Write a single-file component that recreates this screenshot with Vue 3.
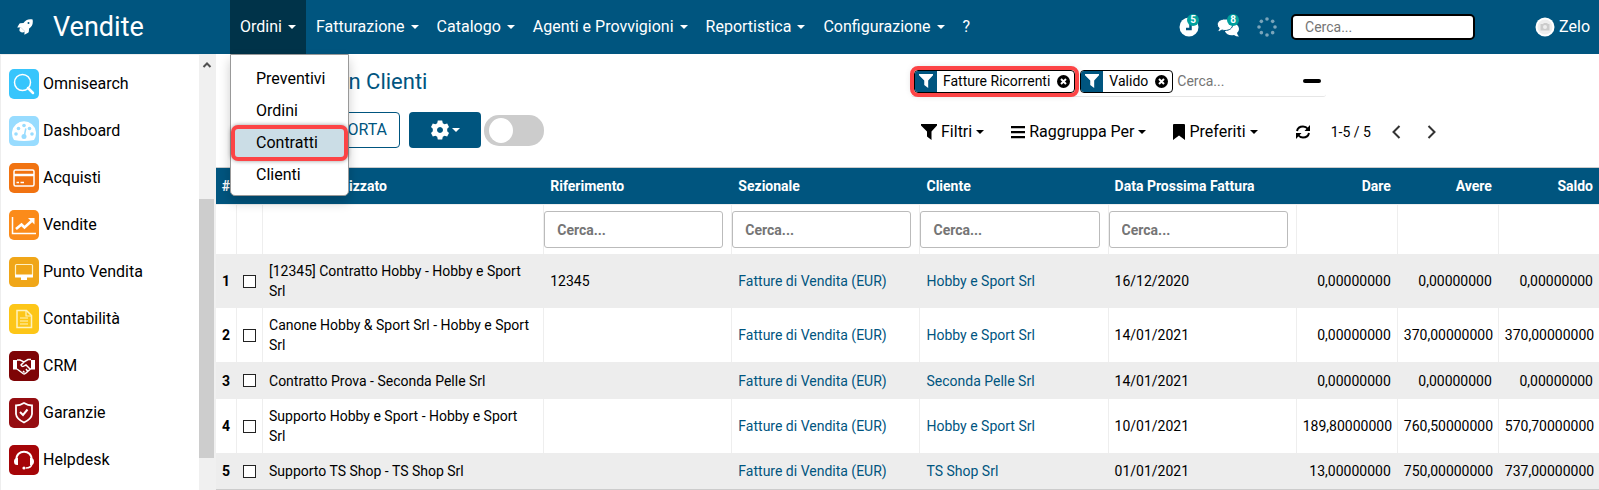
<script setup>
const menus = ['Ordini', 'Fatturazione', 'Catalogo', 'Agenti e Provvigioni', 'Reportistica', 'Configurazione']
const submenu = ['Preventivi', 'Ordini', 'Contratti', 'Clienti']
const apps = [
  { name: 'Omnisearch', key: 'search' },
  { name: 'Dashboard', key: 'dash' },
  { name: 'Acquisti', key: 'card' },
  { name: 'Vendite', key: 'chart' },
  { name: 'Punto Vendita', key: 'pos' },
  { name: 'Contabilità', key: 'doc' },
  { name: 'CRM', key: 'crm' },
  { name: 'Garanzie', key: 'shield' },
  { name: 'Helpdesk', key: 'help' }
]
const facets = [
  { label: 'Fatture Ricorrenti', marked: true },
  { label: 'Valido', marked: false }
]
const filterCols = ['Riferimento', 'Sezionale', 'Cliente', 'Data Prossima Fattura']
const amountCols = ['Dare', 'Avere', 'Saldo']
const journal = 'Fatture di Vendita (EUR)'
const rows = [
  { name: '[12345] Contratto Hobby - Hobby e Sport Srl', ref: '12345', client: 'Hobby e Sport Srl', date: '16/12/2020', amounts: ['0,00000000', '0,00000000', '0,00000000'] },
  { name: 'Canone Hobby & Sport Srl - Hobby e Sport Srl', ref: '', client: 'Hobby e Sport Srl', date: '14/01/2021', amounts: ['0,00000000', '370,00000000', '370,00000000'] },
  { name: 'Contratto Prova - Seconda Pelle Srl', ref: '', client: 'Seconda Pelle Srl', date: '14/01/2021', amounts: ['0,00000000', '0,00000000', '0,00000000'] },
  { name: 'Supporto Hobby e Sport - Hobby e Sport Srl', ref: '', client: 'Hobby e Sport Srl', date: '10/01/2021', amounts: ['189,80000000', '760,50000000', '570,70000000'] },
  { name: 'Supporto TS Shop - TS Shop Srl', ref: '', client: 'TS Shop Srl', date: '01/01/2021', amounts: ['13,00000000', '750,00000000', '737,00000000'] }
]
const dots = Array.from({ length: 8 }, (_, i) => ({
  x: 10 + 8 * Math.cos((i * Math.PI) / 4),
  y: 10 + 8 * Math.sin((i * Math.PI) / 4)
}))
</script>

<template>
  <div class="page">
    <header class="topbar">
      <a href="#" class="brand">
        <svg width="16" height="16" viewBox="0 0 16 16" fill="#fff">
          <path d="M15.600.4C11.300-.4 8.400 1 6.500 3.900L3.200 4.200Q2.600 4.300 2.200 4.900L.2 8.600L3.900 8.500L7.500 12.100L7.400 15.800L11.100 13.800Q11.700 13.400 11.800 12.800L12.100 9.500C15 7.600 16.400 4.700 15.600.4ZM11.500 5A1 1 0 1 1 11.510 3A1 1 0 0 1 11.500 5Z" fill-rule="evenodd" />
          <path d="M3.500 8L8 12.500L6 13.500Q4 13.500 2.500 12Q2 10 3.500 8Z" />
        </svg>
        <span>Vendite</span>
      </a>
      <nav class="menu">
        <div v-for="(m, i) in menus" :key="m" class="menu-item" :class="{ active: i === 0 }">
          <button type="button" class="menu-btn">{{ m }}<i class="caret"></i></button>
          <div v-if="i === 0" class="dropdown">
            <a v-for="s in submenu" :key="s" href="#" :class="{ marked: s === 'Contratti' }">{{ s }}</a>
          </div>
        </div>
        <div class="menu-item"><button type="button" class="menu-btn">?</button></div>
      </nav>
      <div class="tools">
        <button type="button" class="tool" aria-label="Attività">
          <svg width="20" height="20" viewBox="0 0 20 20"><circle cx="10" cy="10" r="9.500" fill="#fff" /><path d="M11.500 4V12H7" fill="none" stroke="#00557f" stroke-width="2.500" /></svg>
          <span class="badge">5</span>
        </button>
        <button type="button" class="tool" aria-label="Messaggi">
          <svg width="22" height="20" viewBox="0 0 22 20" fill="#fff">
            <path d="M10 7C17 4 22 8 22 12Q22 14.500 20 16Q20.500 18 22 19.500Q19 19.500 17 18Q10 19 8 14.500Z" />
            <path d="M8 2C12.500 2 15.600 4.500 15.600 7.800S12.500 13.500 8 13.500Q6.500 13.500 5 13Q3 14.700.2 14.700Q1.700 13 2.200 11.200Q.3 9.500.3 7.800C.3 4.500 3.500 2 8 2Z" stroke="#00557f" />
          </svg>
          <span class="badge">8</span>
        </button>
        <svg class="spinner" width="20" height="20" viewBox="0 0 20 20">
          <circle v-for="(d, i) in dots" :key="i" :cx="d.x" :cy="d.y" r="1.800" fill="#7aa5bb" />
        </svg>
        <input class="top-search" type="text" placeholder="Cerca..." aria-label="Cerca nel menu" />
        <a href="#" class="user">
          <svg width="20" height="20" viewBox="0 0 20 20">
            <circle cx="10" cy="10" r="9.500" fill="#fff" /><circle cx="10" cy="10" r="7.500" fill="#eee" />
            <path d="M5.500 7H8L9 6H12L13 7H14.500V13.500H5.500Z" fill="#ccc" /><circle cx="10" cy="10" r="2" fill="#eee" />
          </svg>
          Zelo
        </a>
      </div>
    </header>

    <div class="body">
      <aside class="sidebar">
        <nav class="apps">
          <a v-for="a in apps" :key="a.key" href="#" class="app">
            <span class="app-icon" :class="a.key">
              <svg width="30" height="30" viewBox="0 0 30 30" fill="none" stroke="#fff" stroke-width="1.500">
                <template v-if="a.key === 'search'">
                  <circle cx="13.500" cy="13.500" r="8" /><path d="M19 19L24 24" stroke-width="2.500" stroke-linecap="round" />
                </template>
                <template v-else-if="a.key === 'dash'">
                  <path d="M5 24A12 12 0 1 1 25 24Q15 26 5 24Z" fill="#fff" stroke="none" />
                  <g fill="#98dcff" stroke="none">
                    <circle cx="7" cy="18" r="1.800" /><circle cx="9.500" cy="12.500" r="1.800" /><circle cx="15" cy="9.500" r="1.800" />
                    <circle cx="20.500" cy="12.500" r="1.800" /><circle cx="23" cy="18" r="1.800" /><circle cx="15" cy="20.500" r="2.500" />
                  </g>
                  <path d="M15.300 20L16.800 12.500" stroke="#98dcff" />
                </template>
                <template v-else-if="a.key === 'card'">
                  <rect x="5" y="7" width="20" height="16" rx="1.500" /><path d="M5 12H25" stroke-width="2.500" /><path d="M7.500 19.500H10M11.500 19.500H15" />
                </template>
                <template v-else-if="a.key === 'chart'">
                  <path d="M3.500 7V23.500H27" />
                  <path d="M7 19L12.500 14.500L15.500 17.500L22.500 11" stroke-width="2.600" /><path d="M19 8H25.500V14.500Z" fill="#fff" stroke="none" />
                </template>
                <template v-else-if="a.key === 'pos'">
                  <rect x="6.500" y="7.500" width="17" height="11" rx="1" stroke-width="1.200" stroke="#fff0c0" />
                  <path d="M6 17.500H24V20Q24 20.500 23.500 20.500H18V23H12V20.500H6.500Q6 20.500 6 20Z" fill="#fff" stroke="none" />
                </template>
                <template v-else-if="a.key === 'doc'">
                  <path d="M8 6.500H17.500L22.500 11.500V23.500H8Z" stroke="#fff3bd" /><path d="M17 7V12H22M11 14H19M11 17H19M11 20H19" stroke="#fff3bd" stroke-width="1.200" />
                </template>
                <template v-else-if="a.key === 'crm'">
                  <path d="M8 9H11L15 11L19 8.500H22M8 18L14 22.500Q15.500 23.500 17 22L22 17.500M15 11L12 14Q13 16.500 16 14.500L17 14L21 18M17 18L18.500 20M14 20L15.500 21.500" />
                  <path d="M4 9H8V18.500H4ZM22 9H26V18.500H22Z" fill="#fff" stroke="none" />
                </template>
                <template v-else-if="a.key === 'shield'">
                  <path d="M15 5Q19 7.500 23 7.500V16Q22.500 21 15 24.500Q7.500 21 7 16V7.500Q11 7.500 15 5Z" stroke-width="1.800" /><path d="M11 14L14 17L18.500 11.500" stroke-width="2" />
                </template>
                <template v-else>
                  <path d="M7.500 15C6.500 4 23.500 4 22.500 15" stroke-width="2" />
                  <path d="M9 13V20Q5 20.500 5 16.500T9 13ZM21 13V20Q25 20.500 25 16.500T21 13Z" fill="#fff" stroke="none" />
                  <path d="M23 19Q22 23 17 23" /><circle cx="15" cy="23" r="1.600" fill="#fff" stroke="none" />
                </template>
              </svg>
            </span>
            {{ a.name }}
          </a>
        </nav>
        <div class="scroll" aria-hidden="true">
          <svg width="16" height="20" viewBox="0 0 16 20"><path d="M4.500 12L8 8.500L11.500 12" fill="none" stroke="#505050" stroke-width="2" /></svg>
          <div class="thumb"></div>
        </div>
      </aside>

      <main class="content">
        <section class="panel">
          <div class="left">
            <h1>Contratti con Clienti</h1>
            <div class="actions">
              <button type="button" class="outline">IMPORTA</button>
              <button type="button" class="gear" aria-label="Azioni">
                <svg width="18" height="20" viewBox="-9 -10 18 20" fill="#fff">
                  <path fill-rule="evenodd" d="M-2.200-9.500H2.200L2.800-6.700L4.600-5.700L7.200-6.600L9-3L7.200-1.200V1.200L9 3L7.200 6.600L4.600 5.700L2.800 6.700L2.200 9.500H-2.200L-2.800 6.700L-4.600 5.700L-7.200 6.600L-9 3L-7.200 1.200V-1.200L-9-3L-7.200-6.600L-4.600-5.700L-2.800-6.700ZM0-3A3 3 0 1 0 .01-3Z" />
                </svg>
                <i class="caret"></i>
              </button>
              <input type="checkbox" class="switch" aria-label="Attiva" />
            </div>
          </div>
          <div class="right">
            <div class="searchbar">
              <span v-for="f in facets" :key="f.label" class="facet" :class="{ marked: f.marked }">
                <span class="facet-icon"><svg width="14" height="16" viewBox="0 0 16 16" fill="#fff"><path d="M0 0H16V1.500L10.500 7.500V16L6 12.500V7.500L0 1.500Z" /></svg></span>
                <span class="facet-label">{{ f.label }}</span>
                <button type="button" class="facet-x" :aria-label="'Rimuovi ' + f.label">
                  <svg width="13" height="13" viewBox="0 0 12 12"><circle cx="6" cy="6" r="6" /><path d="M3.700 3.700L8.300 8.300M8.300 3.700L3.700 8.300" stroke="#fff" stroke-width="1.800" /></svg>
                </button>
              </span>
              <input type="text" placeholder="Cerca..." aria-label="Cerca" />
              <button type="button" class="minus" aria-label="Riduci"></button>
            </div>
            <div class="options">
              <button type="button" class="opt">
                <svg width="16" height="16" viewBox="0 0 16 16"><path d="M0 0H16V1.500L10.500 7.500V16L6 12.500V7.500L0 1.500Z" /></svg>Filtri<i class="caret"></i>
              </button>
              <button type="button" class="opt">
                <svg width="14" height="14" viewBox="0 0 14 14"><path d="M0 1H14V3.200H0ZM0 6H14V8.200H0ZM0 11H14V13.200H0Z" /></svg>Raggruppa Per<i class="caret"></i>
              </button>
              <button type="button" class="opt">
                <svg width="12" height="16" viewBox="0 0 12 16"><path d="M0 1Q0 0 1 0H11Q12 0 12 1V16L6 11.500L0 16Z" /></svg>Preferiti<i class="caret"></i>
              </button>
              <div class="pager">
                <button type="button" class="opt" aria-label="Aggiorna">
                  <svg width="16" height="16" viewBox="0 0 16 16" fill="none" stroke="#000" stroke-width="2"><path d="M2 7Q3 2.500 8 2.500Q11 2.500 13 5M14 9Q13 13.500 8 13.500Q5 13.500 3 11" /><path d="M15 1V7H9.500ZM1 15V9H6.500Z" fill="#000" stroke="none" /></svg>
                </button>
                <span>1-5 / 5</span>
                <button type="button" class="opt" aria-label="Precedente"><svg width="10" height="16" viewBox="0 0 10 16" fill="none" stroke="#333" stroke-width="2"><path d="M8.500 2L2.500 8L8.500 14" /></svg></button>
                <button type="button" class="opt" aria-label="Successiva"><svg width="10" height="16" viewBox="0 0 10 16" fill="none" stroke="#333" stroke-width="2"><path d="M1.500 2L7.500 8L1.500 14" /></svg></button>
              </div>
            </div>
          </div>
        </section>

        <table>
          <colgroup>
            <col class="c-num" /><col class="c-check" /><col class="c-name" />
            <col v-for="c in filterCols" :key="c" class="c-text" />
            <col v-for="c in amountCols" :key="c" class="c-amount" />
          </colgroup>
          <thead>
            <tr class="head">
              <th class="num">#</th><th></th><th class="visual">Nome Visualizzato</th>
              <th v-for="c in filterCols" :key="c">{{ c }}</th>
              <th v-for="c in amountCols" :key="c" class="amount">{{ c }}</th>
            </tr>
            <tr class="filters">
              <td></td><td></td><td></td>
              <td v-for="c in filterCols" :key="c" class="filter"><input type="text" placeholder="Cerca..." :aria-label="'Cerca ' + c" /></td>
              <td v-for="c in amountCols" :key="c"></td>
            </tr>
          </thead>
          <tbody>
            <tr v-for="(r, i) in rows" :key="i">
              <th class="num" scope="row">{{ i + 1 }}</th>
              <td class="check"><input type="checkbox" :aria-label="'Seleziona ' + r.name" /></td>
              <td class="name">{{ r.name }}</td>
              <td>{{ r.ref }}</td>
              <td><a href="#">{{ journal }}</a></td>
              <td><a href="#">{{ r.client }}</a></td>
              <td>{{ r.date }}</td>
              <td v-for="(v, k) in r.amounts" :key="k" class="amount">{{ v }}</td>
            </tr>
          </tbody>
        </table>
      </main>
    </div>
  </div>
</template>

<style>
body { background: #fff; overflow: hidden; }
</style>

<style scoped>
.page { font: 14px/20px Roboto, "Noto Sans", sans-serif; color: #000; }
.page * { box-sizing: border-box; }
a { color: inherit; text-decoration: none; }
button { font: inherit; color: inherit; background: none; border: 0; padding: 0; margin: 0; display: inline-flex; align-items: center; }
input { font: inherit; margin: 0; border-radius: 0; outline: 0; }
input::placeholder { color: #757575; opacity: 1; }
svg { display: block; flex: none; }
.caret { width: 8px; border: 4px solid transparent; border-top-color: currentColor; border-bottom: 0; }

.topbar { display: flex; height: 54px; background: #00557f; color: #fff; font-size: 16px; }
.brand { display: flex; align-items: center; gap: 20px; width: 230px; padding-left: 17px; font-size: 27px; flex: none; }
.menu { display: flex; flex: 1; }
.menu-item { position: relative; display: flex; }
.menu-btn { padding: 0 8px 0 10px; gap: 6px; white-space: nowrap; }
.active { background: #003349; }
.active .menu-btn { padding-right: 10px; }
.dropdown { position: absolute; z-index: 5; top: 54px; left: 0; width: 119px; padding: 8px 0 4px; background: #fff; color: #000; border: 1px solid #999; border-radius: 0 0 5px 5px; box-shadow: 0 6px 12px rgba(0, 0, 0, .2); }
.dropdown a { display: flex; align-items: center; height: 32px; padding-left: 25px; }
.dropdown .marked { height: 36px; margin: -2px 0; padding-left: 21px; background: #cbdde6; border: 4px solid #fc4446; border-radius: 7px; box-shadow: 0 0 4px rgba(0, 0, 0, .4); }
.tools { display: flex; align-items: center; flex: none; padding-right: 9px; }
.tool { position: relative; margin-right: 18px; }
.badge { position: absolute; top: -3px; right: 0; width: 12px; height: 12px; border-radius: 6px; background: #00a09d; font: bold 10px/12px Roboto, sans-serif; text-align: center; color: #fff; }
.spinner { margin-right: 14px; }
.top-search { width: 184px; height: 26px; padding: 0 12px; background: #fff; border: 2px solid #000; border-radius: 5px; font-size: 14px; }
.user { display: flex; align-items: center; gap: 4px; margin-left: 60px; }

.body { display: flex; }
.sidebar { display: flex; width: 216px; flex: none; border-left: 1px solid #eee; border-top: 1px solid #eee; }
.apps { display: flex; flex-direction: column; flex: 1; gap: 17px; padding: 14px 0 0 8px; }
.app { display: flex; align-items: center; gap: 4px; height: 30px; font-size: 16px; }
.app-icon { border-radius: 5px; }
.search { background: #37c5fc; }
.dash { background: #98dcff; }
.card { background: #f17311; }
.chart { background: #fb8b1a; }
.pos { background: #f0a618; }
.doc { background: #fdc618; }
.crm { background: #7e0406; }
.shield { background: #950d11; }
.help { background: #a50508; }
.scroll { display: flex; flex-direction: column; width: 17px; background: #f0f0f0; }
.thumb { width: 15px; height: 259px; margin-top: 124px; background: #cdcdcd; }

.content { flex: 1; min-width: 0; }
.panel { display: flex; justify-content: space-between; height: 113px; }
.left { padding: 14px 0 0 18px; }
h1 { margin: 0; font-size: 22px; line-height: 28px; font-weight: 400; color: #00557f; }
.actions { display: flex; align-items: center; margin-top: 16px; padding-left: 74px; }
.outline { justify-content: flex-end; width: 92px; height: 36px; padding-right: 12px; border: 1px solid #00557f; border-radius: 4px; color: #00557f; font-size: 16px; }
.gear { justify-content: center; gap: 3px; width: 72px; height: 36px; margin: 0 3px 0 9px; background: #00557f; border-radius: 4px; color: #fff; }
.switch { appearance: none; display: flex; align-items: center; width: 60px; height: 31px; padding-left: 5px; background: #ccc; border-radius: 15px; }
.switch::before { content: ""; width: 24px; height: 25px; background: #fff; border-radius: 50%; }
.right { width: 688px; flex: none; padding-top: 12px; }
.searchbar { display: flex; align-items: center; width: 415px; height: 31px; border-bottom: 1px solid #e6e6e6; border-radius: 3px; }
.facet { display: flex; align-items: center; height: 23px; background: #fff; border: 1px solid #000; border-radius: 4px; overflow: hidden; flex: none; }
.facet.marked { outline: 4px solid #fc4446; margin: 0 5px 0 3px; box-shadow: 0 0 8px rgba(0, 0, 0, .3); z-index: 1; }
.facet-icon { display: flex; align-items: center; justify-content: center; width: 22px; height: 23px; background: #00557f; }
.facet-label { padding: 0 7px 0 6px; }
.facet-x { padding-right: 4px; }
.searchbar input { flex: 1; width: 0; border: 0; padding: 0 4px; background: none; }
.minus { width: 18px; height: 4px; margin-right: 5px; background: #000; border-radius: 2px; }
.options { display: flex; align-items: center; gap: 27px; height: 38px; margin-top: 16px; padding: 0 25px 0 10px; font-size: 16px; }
.opt { gap: 4px; white-space: nowrap; }
.pager { display: flex; align-items: center; gap: 20px; margin-left: 10px; }
.pager span { font-size: 14px; }
.pager .opt:last-child { margin-left: 6px; }

table { width: 100%; table-layout: fixed; border-collapse: separate; border-spacing: 0; border-top: 1px solid #ccc; border-bottom: 1px solid #ccc; }
.c-num { width: 20px; }
.c-check { width: 26px; }
.c-name { width: 281px; }
.c-text { width: 188px; }
.c-amount { width: 101px; }
th, td { height: 36px; padding: 7px 6px; text-align: left; vertical-align: middle; border-left: 1px solid #eee; }
tr > :first-child { border-left: 0; }
.head th { height: 36px; padding: 4px 6px; background: #00557f; color: #fff; border-color: #00557f; }
.head .visual { white-space: nowrap; }
.filters td { height: 50px; border-top: 1px solid #eee; }
.filters .filter { padding: 0 8px 0 0; }
.filter input { width: 100%; height: 37px; padding: 0 12px; background: #fff; border: 1px solid #bbb; border-radius: 3px; font-weight: bold; }
.num, .head .num { padding: 0; text-align: center; font-weight: bold; }
.check { padding: 0 6px; }
.check input { appearance: none; display: block; width: 13px; height: 13px; background: #fff; border: 1px solid #222; }
.name { padding-right: 14px; }
tbody a { color: #00557f; }
tbody tr:nth-child(odd) > * { background: #ededed; border-color: #ededed; }
tbody tr:nth-child(3) > * { height: 37px; }
.amount, .head .amount { padding: 0 6px; text-align: right; }
</style>
